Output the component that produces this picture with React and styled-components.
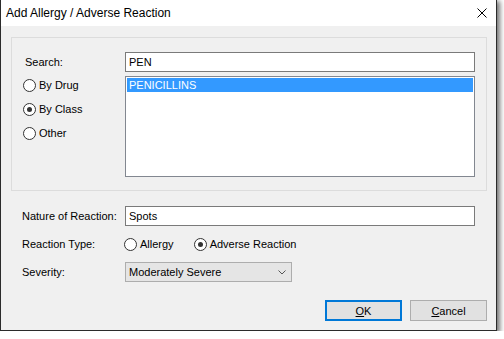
import React from "react";
import styled, { createGlobalStyle } from "styled-components";

const GlobalStyle = createGlobalStyle`
  html, body {
    margin: 0;
    padding: 0;
    background: #fff;
  }
  body {
    font-family: "Liberation Sans", Arial, sans-serif;
    font-size: 11px;
    color: #000;
  }
  * {
    box-sizing: border-box;
  }
`;

const Window = styled.div`
  width: 497px;
  height: 331px;
  border: 1px solid #2b2b2b;
  border-top: none;
  background: #f0f0f0;
  box-shadow: 2px 2px 5px 1px rgba(0, 0, 0, 0.55);
  display: flex;
  flex-direction: column;
`;

const TitleBar = styled.div`
  height: 26px;
  flex-shrink: 0;
  background: #fff;
  display: flex;
  align-items: center;
  justify-content: space-between;
  padding: 0 9px 0 5px;
`;

const Title = styled.div`
  font-size: 12px;
  color: #000;
`;

const Close = styled.div`
  width: 10px;
  height: 10px;
  display: flex;
  cursor: pointer;
`;

const Content = styled.div`
  flex: 1;
  display: flex;
  flex-direction: column;
  padding: 11px 9px 0 10px;
`;

const GroupBox = styled.div`
  border: 1px solid #dcdcdc;
  padding: 14px 11px 13px 0;
  display: grid;
  grid-template-columns: 113px 350px;
  grid-template-rows: 20px 101px;
  row-gap: 4px;
`;

const Label = styled.div`
  display: flex;
  align-items: center;
  margin-left: ${(p) => p.$indent || 0}px;
  white-space: nowrap;
`;

const TextBox = styled.div`
  height: 20px;
  background: #fff;
  border: 1px solid #7a7a7a;
  display: flex;
  align-items: center;
  padding-left: 3px;
`;

const RadioColumn = styled.div`
  display: flex;
  flex-direction: column;
  gap: 6px;
  padding-left: 11px;
`;

const RadioItem = styled.label`
  height: 18px;
  display: flex;
  align-items: center;
  gap: 3px;
  white-space: nowrap;
  cursor: default;
`;

const RadioCircle = styled.span`
  width: 13px;
  height: 13px;
  border-radius: 50%;
  border: 1px solid #333;
  background: #fff;
  display: flex;
  align-items: center;
  justify-content: center;
  flex-shrink: 0;

  &::after {
    content: "";
    width: 5px;
    height: 5px;
    border-radius: 50%;
    background: #333;
    display: ${(p) => (p.$checked ? "block" : "none")};
  }
`;

const ListBox = styled.div`
  background: #fff;
  border: 1px solid #828790;
  padding: 1px;
`;

const ListItem = styled.div`
  height: 14px;
  display: flex;
  align-items: center;
  padding-left: 2px;
  background: ${(p) => (p.$selected ? "#3399ff" : "transparent")};
  color: ${(p) => (p.$selected ? "#fff" : "#000")};
`;

const Form = styled.div`
  margin-top: 15px;
  display: grid;
  grid-template-columns: 114px 350px;
  grid-auto-rows: 20px;
  row-gap: 8px;
`;

const RadioRow = styled.div`
  display: flex;
  align-items: center;
  gap: 20px;
  margin-left: -1px;
`;

const Combo = styled.div`
  width: 167px;
  height: 20px;
  background: #e5e5e5;
  border: 1px solid #adadad;
  display: flex;
  align-items: center;
  justify-content: space-between;
  padding: 0 5px 0 3px;
`;

const ButtonRow = styled.div`
  margin-top: 18px;
  display: flex;
  justify-content: flex-end;
  gap: 8px;
`;

const Button = styled.button`
  width: 77px;
  height: 21px;
  background: #e1e1e1;
  border: ${(p) => (p.$default ? "2px solid #0078d7" : "1px solid #adadad")};
  font-family: "Liberation Sans", Arial, sans-serif;
  font-size: 11px;
  color: #000;
  padding: 0;
  display: flex;
  align-items: center;
  justify-content: center;
  cursor: pointer;

  u {
    text-decoration: underline;
    text-underline-offset: 1px;
  }
`;

const Radio = ({ checked, children }) => (
  <RadioItem>
    <RadioCircle $checked={checked} />
    {children}
  </RadioItem>
);

export default function App() {
  return (
    <>
      <GlobalStyle />
      <Window>
        <TitleBar>
          <Title>Add Allergy / Adverse Reaction</Title>
          <Close>
            <svg width="10" height="10" viewBox="0 0 10 10">
              <path d="M0.5 0.5 L9.5 9.5 M9.5 0.5 L0.5 9.5" stroke="#000" strokeWidth="1" fill="none" />
            </svg>
          </Close>
        </TitleBar>
        <Content>
          <GroupBox>
            <Label $indent={13}>Search:</Label>
            <TextBox>PEN</TextBox>
            <RadioColumn>
              <Radio>By Drug</Radio>
              <Radio checked>By Class</Radio>
              <Radio>Other</Radio>
            </RadioColumn>
            <ListBox>
              <ListItem $selected>PENICILLINS</ListItem>
            </ListBox>
          </GroupBox>

          <Form>
            <Label $indent={11}>Nature of Reaction:</Label>
            <TextBox>Spots</TextBox>
            <Label $indent={11}>Reaction Type:</Label>
            <RadioRow>
              <Radio>Allergy</Radio>
              <Radio checked>Adverse Reaction</Radio>
            </RadioRow>
            <Label $indent={11}>Severity:</Label>
            <Label>
              <Combo>
                <span>Moderately Severe</span>
                <svg width="8" height="5" viewBox="0 0 8 5">
                  <path d="M0.5 0.5 L4 4 L7.5 0.5" stroke="#555" strokeWidth="1" fill="none" />
                </svg>
              </Combo>
            </Label>
          </Form>

          <ButtonRow>
            <Button $default>
              <span><u>O</u>K</span>
            </Button>
            <Button>
              <span><u>C</u>ancel</span>
            </Button>
          </ButtonRow>
        </Content>
      </Window>
    </>
  );
}
